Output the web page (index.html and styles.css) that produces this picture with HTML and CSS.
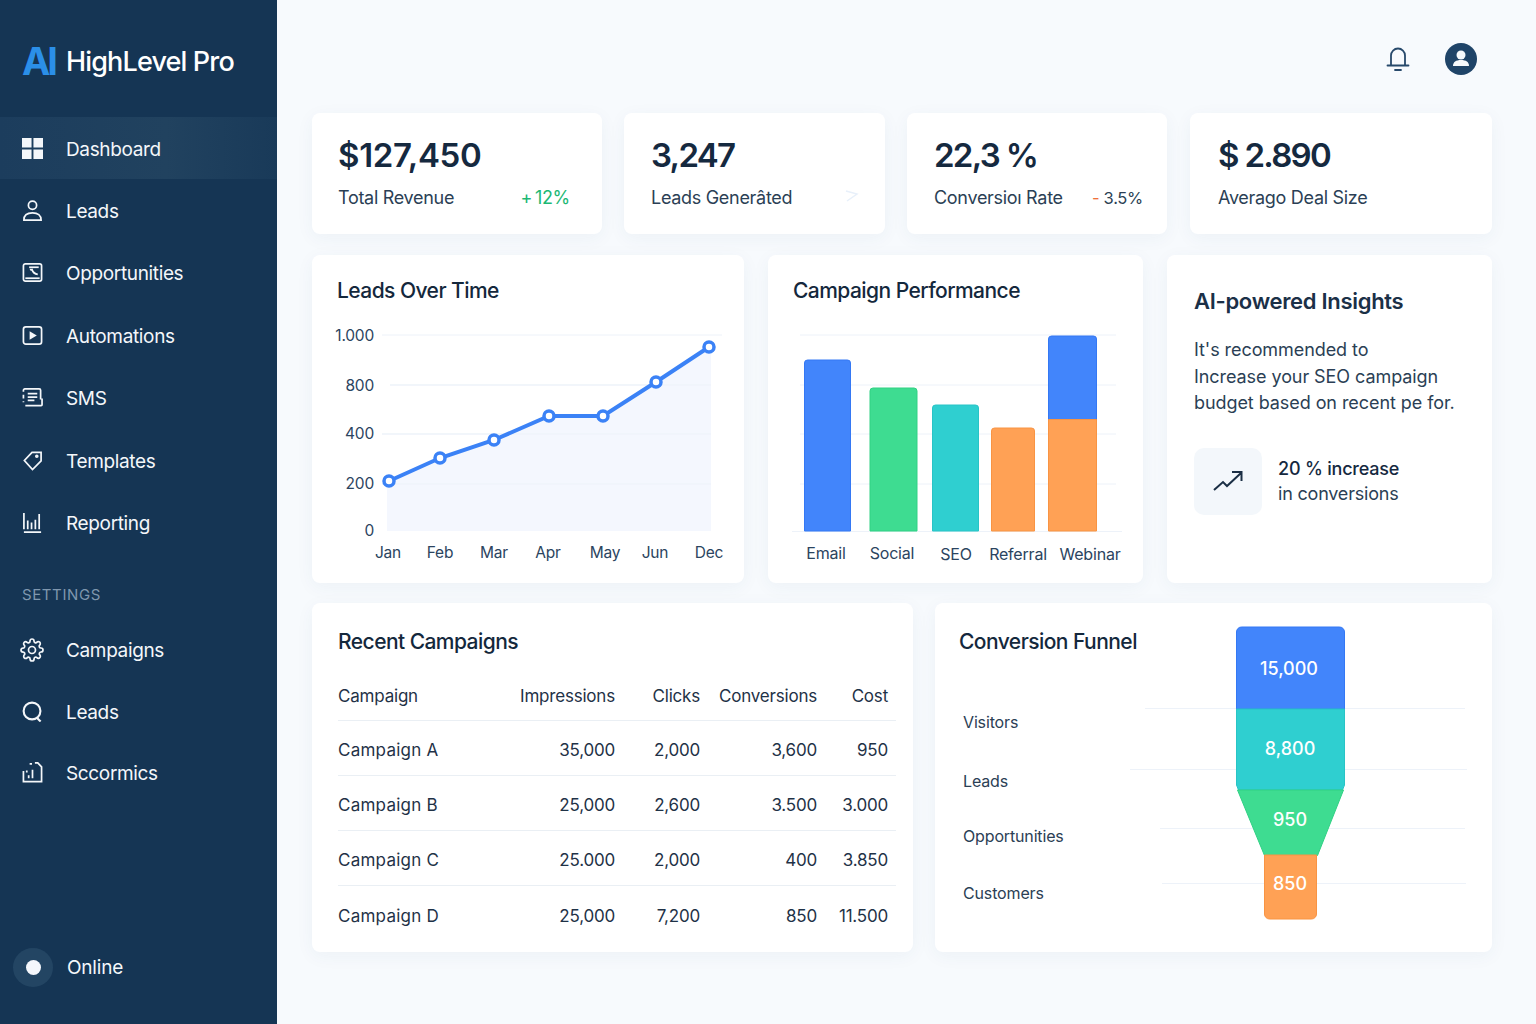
FILE: index.html
```html
<!DOCTYPE html>
<html>
<head>
  <meta charset="UTF-8">
  <title>HighLevel Pro - Dashboard</title>
  <link rel="stylesheet" href="styles.css">
</head>
<body>
  <aside class="sidebar">
    <div class="logo"><span class="logo-ai">AI</span><span class="logo-name">HighLevel Pro</span></div>

    <nav class="nav">
      <a class="nav-item active">
        <svg class="nav-icon" viewBox="0 0 22 22"><path class="solid" d="M0 0h10v10H0zM12 0h10v10H12zM0 12h10v10H0zM12 12h10v10H12z"/></svg>
        <span>Dashboard</span>
      </a>
      <a class="nav-item">
        <svg class="nav-icon" viewBox="0 0 22 22"><circle cx="11" cy="5.500" r="4.300"/><path d="M2 21c0-5 3.500-7.500 9-7.500s9 2.500 9 7.500z"/></svg>
        <span>Leads</span>
      </a>
      <a class="nav-item">
        <svg class="nav-icon" viewBox="0 0 22 22"><rect x="1.500" y="2" width="19" height="18" rx="2"/><path d="M3.500 17h15"/><path d="M9 7c0 1 .5 1.500 1.500 1 1 3 2.500 4.500 6 5"/><path d="M7.500 5.500h10"/></svg>
        <span>Opportunities</span>
      </a>
      <a class="nav-item">
        <svg class="nav-icon" viewBox="0 0 22 22"><rect x="1.500" y="2" width="19" height="18" rx="2.500"/><path class="solid" d="M8 6.500l7.500 4.500L8 15.500z"/></svg>
        <span>Automations</span>
      </a>
      <a class="nav-item">
        <svg class="nav-icon" viewBox="0 0 22 22"><path d="M1.500 5V3.500a1.500 1.500 0 0 1 1.500-1.500h15a1.500 1.500 0 0 1 1.500 1.500V13M1.500 8v4M1.500 15v1M21 12v6.500a1 1 0 0 1-1 1H3.500M6 7h10M6 10.500h10M6 14h7"/></svg>
        <span>SMS</span>
      </a>
      <a class="nav-item">
        <svg class="nav-icon" viewBox="0 0 22 22"><path d="M10.500 2.500h9.500v9l-9 9-8.500-9.500z"/><circle cx="15.500" cy="6.500" r="1"/></svg>
        <span>Templates</span>
      </a>
      <a class="nav-item">
        <svg class="nav-icon" viewBox="0 0 22 22"><path d="M2 1v17M6 9v9M10 11v7M14 8v10M18 2v16M2 21h18"/></svg>
        <span>Reporting</span>
      </a>

      <div class="nav-label">SETTINGS</div>

      <a class="nav-item">
        <svg class="nav-icon large" viewBox="0 0 24 24"><circle cx="12" cy="12" r="3.500"/><path d="M19.400 15a1.650 1.650 0 0 0 .33 1.820l.06.06a2 2 0 0 1 0 2.830 2 2 0 0 1-2.830 0l-.06-.06a1.650 1.650 0 0 0-1.820-.33 1.650 1.650 0 0 0-1 1.510V21a2 2 0 0 1-2 2 2 2 0 0 1-2-2v-.09A1.650 1.650 0 0 0 9 19.400a1.650 1.650 0 0 0-1.820.33l-.06.06a2 2 0 0 1-2.830 0 2 2 0 0 1 0-2.830l.06-.06a1.650 1.650 0 0 0 .33-1.820 1.650 1.650 0 0 0-1.510-1H3a2 2 0 0 1-2-2 2 2 0 0 1 2-2h.09A1.650 1.650 0 0 0 4.600 9a1.650 1.650 0 0 0-.33-1.820l-.06-.06a2 2 0 0 1 0-2.830 2 2 0 0 1 2.830 0l.06.06a1.650 1.650 0 0 0 1.820.33H9a1.650 1.650 0 0 0 1-1.510V3a2 2 0 0 1 2-2 2 2 0 0 1 2 2v.09a1.650 1.650 0 0 0 1 1.510 1.650 1.650 0 0 0 1.820-.33l.06-.06a2 2 0 0 1 2.830 0 2 2 0 0 1 0 2.830l-.06.06a1.650 1.650 0 0 0-.33 1.820V9a1.650 1.650 0 0 0 1.510 1H21a2 2 0 0 1 2 2 2 2 0 0 1-2 2h-.09a1.650 1.650 0 0 0-1.510 1z"/></svg>
        <span>Campaigns</span>
      </a>
      <a class="nav-item">
        <svg class="nav-icon heavy" viewBox="0 0 22 22"><circle cx="10.500" cy="10.500" r="8.800"/><path d="M15.500 17.500l4 4"/></svg>
        <span>Leads</span>
      </a>
      <a class="nav-item">
        <svg class="nav-icon" viewBox="0 0 22 22"><path d="M1.500 9.500v11h19V5l-4-4h-3M8 2h2.500M5 9v2M11 8v9M7 14v3"/></svg>
        <span>Sccormics</span>
      </a>
    </nav>

    <div class="status">
      <span class="status-ring"><span class="status-dot"></span></span>
      Online
    </div>
  </aside>

  <main class="main">
    <div class="topbar">
      <svg class="bell" viewBox="0 0 24 26"><path d="M5 19V9.500a7 7 0 0 1 14 0V19M1.500 19.500h21M9 24h6"/></svg>
      <svg class="avatar" viewBox="0 0 32 32"><circle class="avatar-bg" cx="16" cy="16" r="16"/><circle class="avatar-fg" cx="16" cy="12" r="4.500"/><path class="avatar-fg" d="M8 23c0-4 3-6 8-6s8 2 8 6z"/></svg>
    </div>

    <section class="kpi-row">
      <div class="card kpi">
        <div class="kpi-value">$127,450</div>
        <div class="kpi-foot"><span>Total Revenue</span><span class="up">+ 12%</span></div>
      </div>
      <div class="card kpi">
        <div class="kpi-value tight">3,247</div>
        <div class="kpi-foot"><span>Leads Generâted</span>
          <svg class="ghost" viewBox="0 0 14 14"><path d="M1 3l11 3-10 7"/></svg>
        </div>
      </div>
      <div class="card kpi">
        <div class="kpi-value tight">22,3 %</div>
        <div class="kpi-foot"><span>Conversioı Rate</span><span class="down"><b>-</b> 3.5%</span></div>
      </div>
      <div class="card kpi">
        <div class="kpi-value tight">$ 2.890</div>
        <div class="kpi-foot"><span>Averago Deal Size</span></div>
      </div>
    </section>

    <section class="mid-row">
      <div class="card chart-card">
        <h2>Leads Over Time</h2>
        <svg class="chart" viewBox="312 323 432 260" width="432" height="260">
          <g class="grid">
            <path d="M382 335H722M390 385H711M382 434H711M382 484H711"/>
          </g>
          <path class="area" d="M387 481L440 458L494 440L549 416L603 416L656 382L711 347V531H387Z"/>
          <g class="grid">
            <path d="M390 385H711M382 434H711M382 484H711"/>
          </g>
          <polyline class="line" points="389,481 440,458 494,440 549,416 603,416 656,382 709,347"/>
          <g class="dots">
            <circle cx="389" cy="481" r="5"/><circle cx="440" cy="458" r="5"/><circle cx="494" cy="440" r="5"/>
            <circle cx="549" cy="416" r="5"/><circle cx="603" cy="416" r="5"/><circle cx="656" cy="382" r="5"/>
            <circle cx="709" cy="347" r="5"/>
          </g>
          <g class="y-axis">
            <text x="374" y="341">1.000</text><text x="374" y="391">800</text><text x="374" y="439">400</text>
            <text x="374" y="489">200</text><text x="374" y="536">0</text>
          </g>
          <g class="x-axis">
            <text x="388" y="558">Jan</text><text x="440" y="558">Feb</text><text x="494" y="558">Mar</text>
            <text x="548" y="558">Apr</text><text x="605" y="558">May</text><text x="655" y="558">Jun</text>
            <text x="709" y="558">Dec</text>
          </g>
        </svg>
      </div>

      <div class="card chart-card">
        <h2>Campaign Performance</h2>
        <svg class="chart" viewBox="768 323 374 260" width="374" height="260">
          <g class="grid">
            <path d="M800 335H1116M800 385H1116M800 434H1116M800 484H1116M792 531.500H1122"/>
          </g>
          <g class="bars">
            <path class="blue" d="M804.500 531V363a3 3 0 0 1 3-3h40a3 3 0 0 1 3 3v168z"/>
            <path class="green" d="M870 531V391a3 3 0 0 1 3-3h41a3 3 0 0 1 3 3v140z"/>
            <path class="teal" d="M932.500 531V408a3 3 0 0 1 3-3h40a3 3 0 0 1 3 3v123z"/>
            <path class="orange" d="M991.500 531V431a3 3 0 0 1 3-3h37a3 3 0 0 1 3 3v100z"/>
            <path class="blue" d="M1048.500 420V339a3 3 0 0 1 3-3h42a3 3 0 0 1 3 3v81z"/>
            <path class="orange" d="M1048.500 419.500h48V531h-48z"/>
          </g>
          <g class="x-axis wide">
            <text x="826" y="559">Email</text><text x="892" y="559">Social</text><text x="956" y="560">SEO</text>
            <text x="1018" y="560">Referral</text><text x="1090" y="560">Webinar</text>
          </g>
        </svg>
      </div>

      <div class="card insights">
        <h2>AI-powered Insights</h2>
        <p>It's recommended to<br>Increase your SEO campaign<br>budget based on recent pe for.</p>
        <div class="insight-stat">
          <div class="stat-icon">
            <svg viewBox="0 0 32 24"><path d="M2 21l9-8 4 4 14-13M20 3h9.500v9"/></svg>
          </div>
          <div class="stat-text"><strong>20 % increase</strong><br>in conversions</div>
        </div>
      </div>
    </section>

    <section class="bottom-row">
      <div class="card table-card">
        <h2>Recent Campaigns</h2>
        <table>
          <tr><th>Campaign</th><th>Impressions</th><th>Clicks</th><th>Conversions</th><th>Cost</th></tr>
          <tr><td>Campaign A</td><td>35,000</td><td>2,000</td><td>3,600</td><td>950</td></tr>
          <tr><td>Campaign B</td><td>25,000</td><td>2,600</td><td>3.500</td><td>3.000</td></tr>
          <tr><td>Campaign C</td><td>25.000</td><td>2,000</td><td>400</td><td>3.850</td></tr>
          <tr><td>Campaign D</td><td>25,000</td><td>7,200</td><td>850</td><td>11.500</td></tr>
        </table>
      </div>

      <div class="card funnel-card">
        <div class="funnel-side">
          <h2>Conversion Funnel</h2>
          <ul class="funnel-labels">
            <li>Visitors</li>
            <li>Leads</li>
            <li>Opportunities</li>
            <li>Customers</li>
          </ul>
        </div>
        <svg class="funnel" viewBox="1130 620 340 305" width="340" height="305">
          <g class="grid">
            <path d="M1145 708.500H1465M1130 769.500H1467M1160 828.500H1465M1162 883.500H1466"/>
          </g>
          <g class="bars">
            <path class="blue" d="M1236.500 709V632a5 5 0 0 1 5-5h98a5 5 0 0 1 5 5v77z"/>
            <path class="teal" d="M1236.500 709h108v76l-2 5h-104l-2-5z"/>
            <path class="green" d="M1237.500 790h106l-26 65.500h-53z"/>
            <path class="orange" d="M1264.500 855h52v59a5 5 0 0 1-5 5h-42a5 5 0 0 1-5-5z"/>
          </g>
          <g class="funnel-values">
            <text x="1289" y="675">15,000</text><text x="1290" y="755">8,800</text>
            <text x="1290" y="826">950</text><text x="1290" y="890">850</text>
          </g>
        </svg>
      </div>
    </section>
  </main>
</body>
</html>
```

FILE: styles.css
```css
/* Dashboard layout */
* {
  box-sizing: border-box;
}

body {
  margin: 0;
  height: 1024px;
  overflow: hidden;
  display: flex;
  font-family: Inter, "Noto Sans", sans-serif;
  background-color: #f7fafd;
  color: #1b3047;
}

/* Sidebar */
.sidebar {
  width: 277px;
  flex-shrink: 0;
  display: flex;
  flex-direction: column;
  background-color: #153554;
  color: #fff;
}

.logo {
  height: 117px;
  padding: 5px 0 0 22px;
  display: flex;
  align-items: center;
}

.logo-ai {
  width: 44px;
  font-size: 38px;
  font-weight: 700;
  letter-spacing: -3px;
  color: #2b8fe8;
}

.logo-name {
  font-size: 27px;
  font-weight: 500;
  letter-spacing: -0.85px;
}

.nav-item {
  height: 62.400px;
  padding-left: 22px;
  display: flex;
  align-items: center;
  gap: 23px;
  font-size: 19px;
  letter-spacing: -0.35px;
  color: #f4f7fa;
}

.nav-item span {
  padding-top: 2px;
}

.nav-item.active {
  background: linear-gradient(90deg, #1c3d5d, #21425f 60%, #193a59);
}

.nav-label ~ .nav-item {
  height: 61.500px;
}

.nav-icon {
  width: 21px;
  height: 21px;
  fill: none;
  stroke: #f4f7fa;
  stroke-width: 1.800;
}

.nav-icon.large {
  width: 24px;
  height: 24px;
  margin: 0 -1px 0 -2px;
  stroke-width: 1.700;
}

.nav-icon.heavy {
  stroke-width: 2.200;
}

.nav-icon .solid {
  fill: #f4f7fa;
  stroke: none;
}

.nav-label {
  height: 65.500px;
  padding: 31px 0 0 22px;
  font-size: 15px;
  letter-spacing: 0.6px;
  color: #7f97ae;
}

.status {
  margin-top: auto;
  padding: 0 0 37px 13px;
  display: flex;
  align-items: center;
  gap: 14px;
  font-size: 19px;
  letter-spacing: -0.2px;
  color: #f4f7fa;
}

.status-ring {
  width: 40px;
  height: 39px;
  border-radius: 50%;
  background-color: #234563;
  display: flex;
  align-items: center;
  justify-content: center;
}

.status-dot {
  width: 15px;
  height: 15px;
  border-radius: 50%;
  background-color: #f4f7fc;
}

/* Main area */
.main {
  flex: 1;
  padding: 0 44px 0 35px;
}

.topbar {
  height: 113px;
  padding: 4px 15px 0 0;
  display: flex;
  justify-content: flex-end;
  align-items: center;
  gap: 35px;
}

.bell {
  width: 24px;
  height: 26px;
  fill: none;
  stroke: #27496b;
  stroke-width: 1.800;
  stroke-linecap: round;
}

.avatar {
  width: 32px;
  height: 32px;
}

.avatar-bg {
  fill: #1f4468;
}

.avatar-fg {
  fill: #f6f9fc;
}

.card {
  background-color: #fff;
  border-radius: 8px;
  box-shadow: 0 4px 18px rgba(40, 70, 110, 0.05);
}

h2 {
  margin: 0;
  font-size: 21px;
  line-height: 26px;
  font-weight: 500;
  letter-spacing: -0.55px;
  color: #14283c;
}

/* KPI cards */
.kpi-row {
  height: 121px;
  margin-bottom: 21px;
  display: grid;
  grid-template-columns: 290px 261px 260px 303px;
  column-gap: 22px;
}

.kpi {
  padding: 21px 26px 0 27px;
}

.kpi:first-child {
  padding-left: 26px;
}

.kpi:nth-child(4) {
  margin-left: 1px;
  padding-left: 28px;
}

.kpi-value {
  height: 42px;
  font-size: 33px;
  line-height: 42px;
  font-weight: 600;
  letter-spacing: -0.3px;
  color: #15293f;
}

.kpi-value.tight {
  letter-spacing: -1.700px;
}

.kpi-foot {
  margin-top: 11px;
  display: flex;
  justify-content: space-between;
  align-items: center;
  font-size: 18px;
  letter-spacing: -0.3px;
  color: #2b3f55;
}

.up {
  margin-right: 6px;
  word-spacing: -2px;
  color: #1cb874;
}

.down {
  font-size: 16.500px;
  margin-right: -2px;
}

.down b {
  font-weight: 400;
  color: #f0703a;
}

.ghost {
  width: 14px;
  height: 14px;
  margin: 0 0 6px 0;
  fill: none;
  stroke: #e8f0fa;
  stroke-width: 1.500;
}

/* Chart cards */
.mid-row {
  height: 328px;
  margin-bottom: 20px;
  display: grid;
  grid-template-columns: 432px 375px 325px;
  column-gap: 24px;
}

.chart-card {
  padding: 23px 25px 0 25px;
}

.chart {
  display: block;
  margin: 19px 0 0 -25px;
}

.grid path {
  fill: none;
  stroke: #edf2f9;
  stroke-width: 1;
}

.area {
  fill: #f4f7fe;
}

.line {
  fill: none;
  stroke: #3b82f6;
  stroke-width: 4;
}

.dots circle {
  fill: #fff;
  stroke: #3b82f6;
  stroke-width: 3.500;
}

.y-axis text {
  font-size: 15.500px;
  letter-spacing: -0.2px;
  text-anchor: end;
  fill: #2b4460;
}

.x-axis text {
  font-size: 15.500px;
  letter-spacing: -0.2px;
  text-anchor: middle;
  fill: #2b4460;
}

.x-axis.wide text {
  font-size: 16px;
}

.blue {
  fill: #4285fb;
  stroke: #3478f4;
}

.green {
  fill: #3edc91;
  stroke: #30d184;
}

.teal {
  fill: #2fcfd0;
  stroke: #28c4c6;
}

.orange {
  fill: #ffa155;
  stroke: #f99443;
}

/* Insights */
.insights {
  padding: 33px 27px 0 27px;
}

.insights h2 {
  font-size: 22px;
  font-weight: 600;
  letter-spacing: -0.3px;
  color: #1b3047;
}

.insights p {
  margin: 23px 0 0 0;
  font-size: 18px;
  line-height: 26.500px;
  letter-spacing: -0.07px;
  color: #2b3f55;
}

.insight-stat {
  margin-top: 31px;
  display: flex;
  align-items: center;
  gap: 16px;
}

.stat-icon {
  width: 68px;
  height: 67px;
  border-radius: 10px;
  background-color: #f3f7fb;
  display: flex;
  align-items: center;
  justify-content: center;
}

.stat-icon svg {
  width: 32px;
  height: 24px;
  fill: none;
  stroke: #1b2f45;
  stroke-width: 2;
}

.stat-text {
  font-size: 18px;
  line-height: 25px;
  letter-spacing: -0.2px;
  color: #2b3f55;
}

.stat-text strong {
  font-weight: 500;
  color: #15293f;
}

/* Table */
.bottom-row {
  height: 349px;
  display: grid;
  grid-template-columns: 601px 557px;
  column-gap: 22px;
}

.table-card {
  padding: 26px 16px 0 26px;
}

table {
  width: 558px;
  margin-top: 19px;
  border-collapse: collapse;
  table-layout: fixed;
  font-size: 17px;
  letter-spacing: -0.2px;
}

th,
td {
  height: 55.300px;
  padding: 4px 0 0 0;
  text-align: right;
  font-weight: 400;
  border-bottom: 1px solid #eaeff4;
  color: #1f3247;
}

th {
  height: 46px;
  padding: 0 0 2px 0;
}

th:first-child,
td:first-child {
  text-align: left;
  width: 170px;
}

td:first-child {
  letter-spacing: 0.25px;
}

th:nth-child(2) {
  width: 107px;
}

th:nth-child(3) {
  width: 85px;
}

th:nth-child(4) {
  width: 117px;
}

th:last-child,
td:last-child {
  padding-right: 8px;
}

tr:last-child td {
  border-bottom: none;
}

/* Funnel */
.funnel-card {
  padding: 26px 0 0 24px;
  display: flex;
}

.funnel-side {
  width: 171px;
  flex-shrink: 0;
}

.funnel-side h2 {
  white-space: nowrap;
}

.funnel-labels {
  list-style: none;
  margin: 57px 0 0 0;
  padding: 0 0 0 4px;
  font-size: 16px;
  letter-spacing: -0.15px;
  color: #2b4055;
}

.funnel-labels li {
  height: 57px;
  white-space: nowrap;
}

.funnel-labels li:first-child {
  height: 59px;
}

.funnel-labels li:nth-child(2) {
  height: 55px;
}

.funnel {
  display: block;
  margin-top: -9px;
}

.funnel-values text {
  font-size: 18px;
  font-weight: 500;
  text-anchor: middle;
  fill: #fff;
}
```
